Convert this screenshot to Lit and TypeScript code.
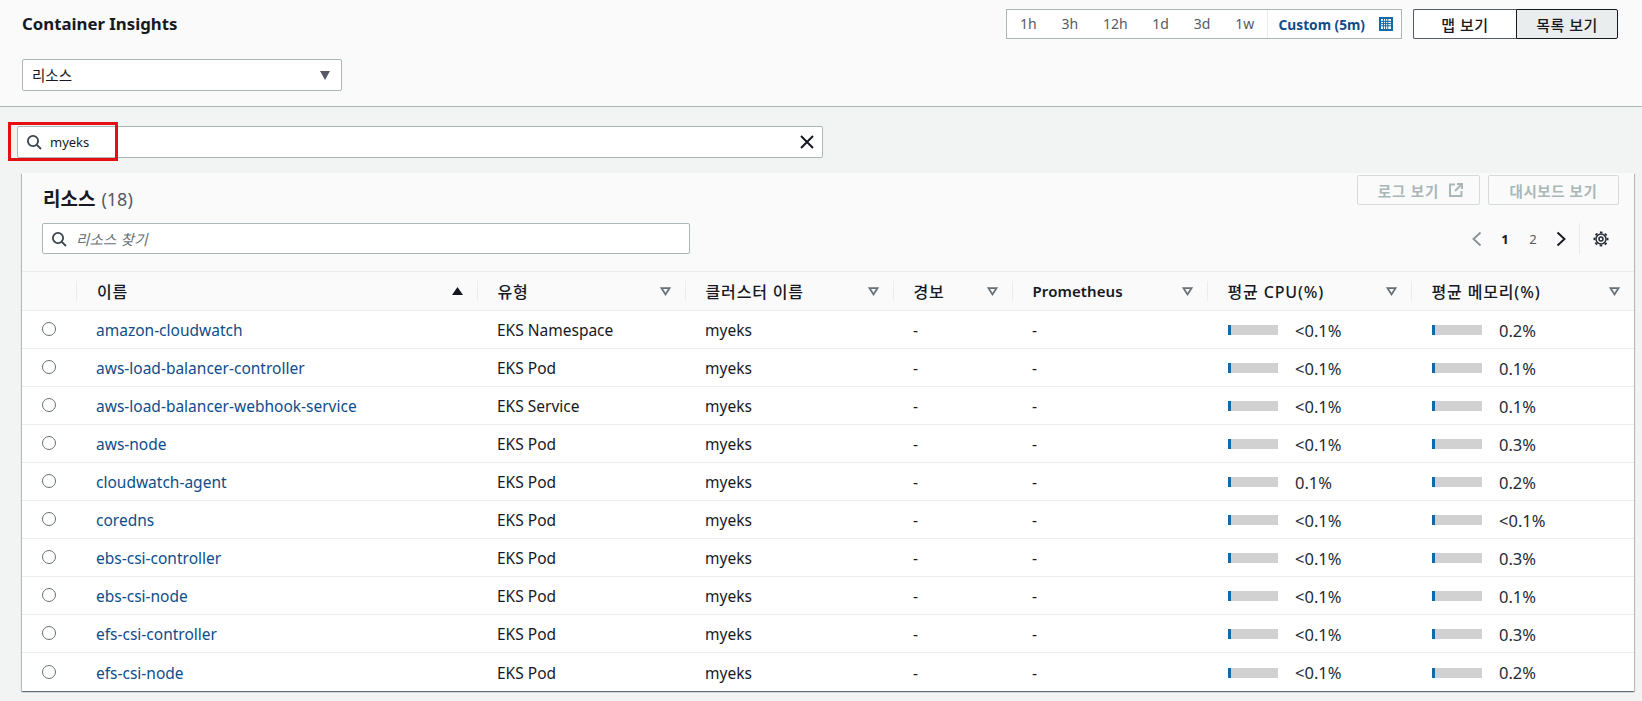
import { LitElement, html, css, svg } from "lit";
import { customElement } from "lit/decorators.js";

const rows = [
  ["amazon-cloudwatch", "EKS Namespace", "<0.1%", "0.2%"],
  ["aws-load-balancer-controller", "EKS Pod", "<0.1%", "0.1%"],
  ["aws-load-balancer-webhook-service", "EKS Service", "<0.1%", "0.1%"],
  ["aws-node", "EKS Pod", "<0.1%", "0.3%"],
  ["cloudwatch-agent", "EKS Pod", "0.1%", "0.2%"],
  ["coredns", "EKS Pod", "<0.1%", "<0.1%"],
  ["ebs-csi-controller", "EKS Pod", "<0.1%", "0.3%"],
  ["ebs-csi-node", "EKS Pod", "<0.1%", "0.1%"],
  ["efs-csi-controller", "EKS Pod", "<0.1%", "0.3%"],
  ["efs-csi-node", "EKS Pod", "<0.1%", "0.2%"],
];

const columns = [
  { label: "이름", sorted: true },
  { label: "유형" },
  { label: "클러스터 이름" },
  { label: "경보" },
  { label: "Prometheus", latin: true },
  { label: "평균 CPU(%)" },
  { label: "평균 메모리(%)" },
];

const searchIcon = html`<svg class="ico" width="16" height="16" viewBox="0 0 16 16" fill="none" stroke="#37424d" stroke-width="1.8"><circle cx="7" cy="7" r="5.1"/><path d="M10.8 10.8 15 15"/></svg>`;
const closeIcon = html`<svg class="ico" width="16" height="16" viewBox="0 0 16 16" fill="none" stroke="#16191f" stroke-width="2"><path d="M2 2l12 12M14 2 2 14"/></svg>`;
const calendarIcon = html`<svg class="ico" width="14" height="14" viewBox="0 0 14 14"><rect width="14" height="14" fill="#0f69ab"/><rect x="2" y="2" width="10" height="10" fill="#fff"/><g fill="#0f69ab">${[4.4, 6.6, 8.8].map((p) => svg`<rect x="${p - 0.5}" y="2" width="1" height="10"/><rect x="2" y="${p - 0.5}" width="10" height="1"/>`)}</g></svg>`;
const externalIcon = html`<svg class="ico" width="14" height="14" viewBox="0 0 14 14" fill="none" stroke="#aab7b8" stroke-width="2"><path d="M6 1.5H1v11.5h11.5V8"/><path d="M8 1h5v5"/><path d="M13 1 6 8"/></svg>`;
const gearIcon = html`<svg class="ico" width="16" height="16" viewBox="0 0 16 16" fill="none" stroke="#232b37"><circle cx="8" cy="8" r="6.6" stroke-width="1.8" stroke-dasharray="2.6 2.58" stroke-dashoffset="1.3"/><circle cx="8" cy="8" r="5" stroke-width="1.5"/><circle cx="8" cy="8" r="2" stroke-width="1.5"/></svg>`;
const chevron = (dir: "l" | "r", color: string) => html`<svg class="ico" width="16" height="16" viewBox="0 0 16 16" fill="none" stroke="${color}" stroke-width="1.9"><path d="${dir === "l" ? "M11.5 1.5 4.5 8l7 6.5" : "M4.5 1.5 11.5 8l-7 6.5"}"/></svg>`;
const caretDown = html`<svg class="ico" width="10" height="9" viewBox="0 0 10 9"><path d="M0 0h10L5 9z" fill="#545b64"/></svg>`;
const sortOpen = html`<svg class="ico" width="11" height="9" viewBox="0 0 11 9" fill="none" stroke="#687078" stroke-width="1.8"><path d="M1.5 1.2h8L5.5 7.4z"/></svg>`;
const sortUp = html`<svg class="ico" width="11" height="8" viewBox="0 0 11 8"><path d="M5.5 0 11 8H0z" fill="#16191f"/></svg>`;

const FONT = css`"Noto Sans", "Noto Sans CJK KR", sans-serif`;

@customElement("app-root")
export class AppRoot extends LitElement {
  static styles = css`
    :host {
      display: block;
      width: 100%;
      height: 701px;
      overflow: hidden;
      background: #f2f3f3;
      color: #16191f;
      font-family: ${FONT};
      font-size: 15.5px;
    }
    * { box-sizing: border-box; }
    .ico { display: block; flex: none; }
    .top {
      height: 107px;
      background: #fafafa;
      border-bottom: 1px solid #aab7b8;
      padding: 9px 24px 0 22px;
    }
    .top-row { display: flex; align-items: flex-start; justify-content: space-between; height: 30px; }
    .title { font-size: 16.8px; font-weight: 700; line-height: 30px; }
    .controls { display: flex; gap: 11px; }
    .times {
      display: flex; align-items: center; height: 30px; width: 396px;
      background: #fff; border: 1px solid #aab7b8; color: #545b64; font-size: 14px;
    }
    .preset { padding: 0 12.4px; line-height: 28px; }
    .preset:first-child { padding-left: 13px; }
    .custom {
      display: flex; align-items: center; justify-content: space-between; white-space: nowrap;
      flex: 1; height: 100%; padding: 0 8px 0 11px; margin-left: auto;
      border-left: 1px solid #eaeded; font-weight: 700; color: #0f4d8a; font-size: 13.7px;
    }
    .views { display: flex; }
    .view {
      width: 103px; height: 30px; display: flex; align-items: center; justify-content: center;
      background: #fff; border: 1px solid #545b64; font-weight: 500; font-size: 15px; letter-spacing: .5px; color: #16191f;
    }
    .view:first-child { border-radius: 2px 0 0 2px; border-right: none; }
    .view.on { width: 102px; background: #eaeded; border-color: #16191f; border-radius: 0 2px 2px 0; }
    .select {
      margin-top: 20px; width: 320px; height: 32px; display: flex; align-items: center; justify-content: space-between;
      background: #fff; border: 1px solid #aab7b8; border-radius: 2px; padding: 0 11px 2px 9px; font-size: 14.5px;
    }
    .select .ico { margin-top: 2px; }
    .filter-row { position: relative; padding: 19px 0 0 17px; }
    .field {
      display: flex; align-items: center; height: 31px;
      background: #fff; border: 1px solid #aab7b8; border-radius: 2px;
    }
    .filter { width: 806px; height: 32px; padding: 0 7px 0 8px; justify-content: flex-start; gap: 8px; font-size: 13px; }
    .filter .grow { flex: 1; }
    .mark {
      position: absolute; left: 8px; top: 15px; width: 110px; height: 39px;
      border: 3px solid #e60f0f; pointer-events: none;
    }
    .card {
      margin: 15px 8px 0 22px; height: 518px; background: #fff;
      box-shadow: 0 1px 1px 0 rgba(0,28,36,.4), 1px 1px 1px 0 rgba(0,28,36,.2), -1px 1px 1px 0 rgba(0,28,36,.2);
    }
    .card-head { height: 99px; background: #fafafa; padding: 2px 15px 0 20px; border-bottom: 1px solid #eaeded; }
    .head-row { display: flex; justify-content: space-between; height: 30px; }
    h2 { margin: 12px 0 0 1px; font-size: 19px; font-weight: 700; line-height: 24px; white-space: nowrap; }
    h2 span { font-weight: 400; font-size: 18px; color: #545b64; margin-left: 1px; }
    .actions { display: flex; gap: 8px; }
    .btn {
      height: 30px; display: flex; align-items: center; justify-content: center; gap: 10px;
      border: 1px solid #d5dbdb; border-radius: 2px; color: #aab7b8; font-weight: 700; font-size: 14.5px; letter-spacing: .6px;
    }
    .btn.logs { width: 123px; letter-spacing: .9px; padding-left: 4px; }
    .btn.dash { width: 131px; }
    .tools { display: flex; justify-content: space-between; align-items: center; margin-top: 18px; }
    .find { width: 648px; padding-left: 8px; gap: 9px; font-size: 14.5px; }
    .find em { color: #687078; letter-spacing: .2px; }
    .pager { display: flex; align-items: center; height: 31px; padding-right: 10px; }
    .pager b, .pager i { width: 28px; text-align: center; font-style: normal; font-size: 13px; }
    .pager i { color: #545b64; }
    .pager .prev { margin-right: 6px; }
    .pager .next { margin-left: 6px; }
    .pager .sep { width: 1px; height: 31px; background: #eaeded; margin: 0 13px 0 10px; }
    .grid { display: grid; grid-template-columns: 54px 401px 208px 208px 119px 195px 204px 223px; }
    .thead { height: 39px; background: #fafafa; border-bottom: 1px solid #eaeded; align-items: center; }
    .th {
      display: flex; align-items: center; justify-content: space-between; height: 20px;
      padding: 0 14px 0 19.5px; border-left: 1px solid #eaeded; font-weight: 500; font-size: 16px; letter-spacing: .85px; white-space: nowrap;
    }
    .th.first { padding-left: 20px; }
    .th.lat { font-size: 15px; font-weight: 600; letter-spacing: .1px; }
    .tr { height: 38px; border-bottom: 1px solid #eaeded; align-items: center; }
    .tr:last-child { border-bottom: none; }
    .radio { width: 14px; height: 14px; margin: 0 0 1px 20px; border: 1px solid #687078; border-radius: 50%; background: #fff; }
    .td { padding: 1px 0 0 20px; white-space: nowrap; }
    .metric { display: flex; align-items: center; gap: 17px; padding: 1px 0 0 21px; font-size: 16.5px; color: #232b37; }
    .td.name { color: #0f4d8a; }
    .bar { width: 50px; height: 10px; background: #d1d1d1; }
    .bar div { width: 3px; height: 100%; background: #0f69ab; }
  `;

  private metric(v: string) {
    return html`<div class="td metric"><div class="bar"><div></div></div><span>${v}</span></div>`;
  }

  render() {
    return html`
      <div class="top">
        <div class="top-row">
          <div class="title">Container Insights</div>
          <div class="controls">
            <div class="times">
              ${["1h", "3h", "12h", "1d", "3d", "1w"].map((t) => html`<div class="preset">${t}</div>`)}
              <div class="custom"><span>Custom (5m)</span>${calendarIcon}</div>
            </div>
            <div class="views">
              <div class="view">맵 보기</div>
              <div class="view on">목록 보기</div>
            </div>
          </div>
        </div>
        <div class="select"><span>리소스</span>${caretDown}</div>
      </div>
      <div class="filter-row">
        <div class="field filter">${searchIcon}<span class="grow">myeks</span>${closeIcon}</div>
        <div class="mark"></div>
      </div>
      <div class="card">
        <div class="card-head">
          <div class="head-row">
            <h2>리소스 <span>(18)</span></h2>
            <div class="actions">
              <div class="btn logs">로그 보기 ${externalIcon}</div>
              <div class="btn dash">대시보드 보기</div>
            </div>
          </div>
          <div class="tools">
            <div class="field find">${searchIcon}<em>리소스 찾기</em></div>
            <div class="pager">
              <span class="prev">${chevron("l", "#879596")}</span>
              <b>1</b><i>2</i>
              <span class="next">${chevron("r", "#16191f")}</span>
              <div class="sep"></div>
              ${gearIcon}
            </div>
          </div>
        </div>
        <div class="grid thead">
          <div></div>
          ${columns.map(
            (c) => html`<div class="th ${c.latin ? "lat" : ""} ${c.sorted ? "first" : ""}"><span>${c.label}</span>${c.sorted ? sortUp : sortOpen}</div>`
          )}
        </div>
        ${rows.map(
          (r) => html`<div class="grid tr">
            <div class="radio"></div>
            <div class="td name">${r[0]}</div>
            <div class="td">${r[1]}</div>
            <div class="td">myeks</div>
            <div class="td">-</div>
            <div class="td">-</div>
            ${this.metric(r[2])}
            ${this.metric(r[3])}
          </div>`
        )}
      </div>
    `;
  }
}
